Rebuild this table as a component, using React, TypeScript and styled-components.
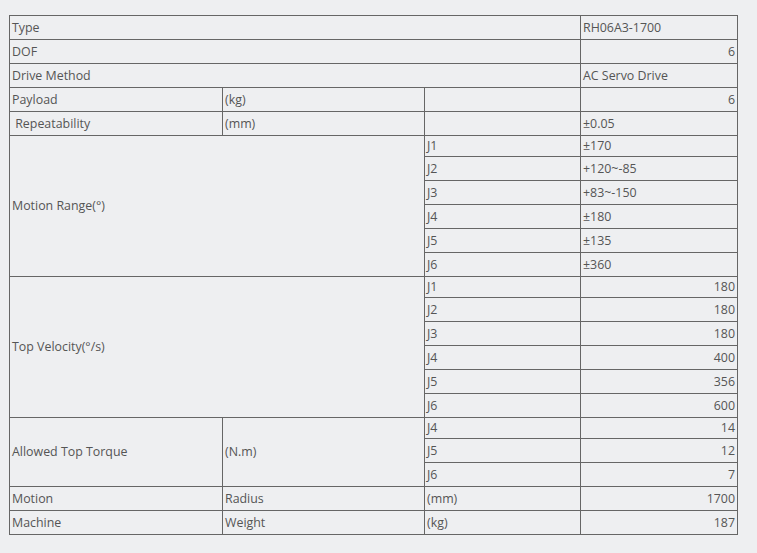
import React from "react";
import styled, { createGlobalStyle } from "styled-components";

const Global = createGlobalStyle`
  html, body { margin: 0; padding: 0; background: #eeeff1; }
  body { font-family: "Open Sans", "Noto Sans CJK SC", sans-serif; }
`;

const Page = styled.div`
  padding: 15px 0 0 9px;
  width: 757px;
  height: 553px;
  box-sizing: border-box;
  background: #eeeff1;
`;

const Table = styled.table`
  border-collapse: collapse;
  table-layout: fixed;
  width: 728px;
  font-size: 12.4px;
  color: #555;
`;

const Row = styled.tr<{ $h: number }>`
  height: ${(p) => p.$h}px;
`;

const Cell = styled.td<{ $right?: boolean }>`
  border: 1px solid #666;
  padding: 0 2px;
  text-align: ${(p) => (p.$right ? "right" : "left")};
  vertical-align: middle;
  white-space: nowrap;
  line-height: 16px;
`;

type Sub = { j: string; v: string; right?: boolean };

const motion: Sub[] = [
  { j: "J1", v: "±170" },
  { j: "J2", v: "+120~-85" },
  { j: "J3", v: "+83~-150" },
  { j: "J4", v: "±180" },
  { j: "J5", v: "±135" },
  { j: "J6", v: "±360" },
];
const velocity: Sub[] = [
  { j: "J1", v: "180", right: true },
  { j: "J2", v: "180", right: true },
  { j: "J3", v: "180", right: true },
  { j: "J4", v: "400", right: true },
  { j: "J5", v: "356", right: true },
  { j: "J6", v: "600", right: true },
];
const torque: Sub[] = [
  { j: "J4", v: "14", right: true },
  { j: "J5", v: "12", right: true },
  { j: "J6", v: "7", right: true },
];

export default function App() {
  return (
    <>
      <Global />
      <Page>
        <Table>
          <colgroup>
            <col style={{ width: 213 }} />
            <col style={{ width: 202 }} />
            <col style={{ width: 156 }} />
            <col style={{ width: 157 }} />
          </colgroup>
          <tbody>
            <Row $h={24}>
              <Cell colSpan={3}>Type</Cell>
              <Cell>RH06A3-1700</Cell>
            </Row>
            <Row $h={24}>
              <Cell colSpan={3}>DOF</Cell>
              <Cell $right>6</Cell>
            </Row>
            <Row $h={24}>
              <Cell colSpan={3}>Drive Method</Cell>
              <Cell>AC Servo Drive</Cell>
            </Row>
            <Row $h={24}>
              <Cell>Payload</Cell>
              <Cell>(kg)</Cell>
              <Cell></Cell>
              <Cell $right>6</Cell>
            </Row>
            <Row $h={24}>
              <Cell>&nbsp;Repeatability</Cell>
              <Cell>(mm)</Cell>
              <Cell></Cell>
              <Cell>±0.05</Cell>
            </Row>
            {motion.map((m, i) => (
              <Row $h={i === 0 ? 21 : 24} key={"m" + m.j}>
                {i === 0 && (
                  <Cell colSpan={2} rowSpan={motion.length}>
                    Motion Range(°)
                  </Cell>
                )}
                <Cell>{m.j}</Cell>
                <Cell $right={m.right}>{m.v}</Cell>
              </Row>
            ))}
            {velocity.map((m, i) => (
              <Row $h={i === 0 ? 21 : 24} key={"v" + m.j}>
                {i === 0 && (
                  <Cell colSpan={2} rowSpan={velocity.length}>
                    Top Velocity(°/s)
                  </Cell>
                )}
                <Cell>{m.j}</Cell>
                <Cell $right={m.right}>{m.v}</Cell>
              </Row>
            ))}
            {torque.map((m, i) => (
              <Row $h={i === 0 ? 21 : 24} key={"t" + m.j}>
                {i === 0 && (
                  <>
                    <Cell rowSpan={torque.length}>Allowed Top Torque</Cell>
                    <Cell rowSpan={torque.length}>(N.m)</Cell>
                  </>
                )}
                <Cell>{m.j}</Cell>
                <Cell $right={m.right}>{m.v}</Cell>
              </Row>
            ))}
            <Row $h={24}>
              <Cell>Motion</Cell>
              <Cell>Radius</Cell>
              <Cell>(mm)</Cell>
              <Cell $right>1700</Cell>
            </Row>
            <Row $h={24}>
              <Cell>Machine</Cell>
              <Cell>Weight</Cell>
              <Cell>(kg)</Cell>
              <Cell $right>187</Cell>
            </Row>
          </tbody>
        </Table>
      </Page>
    </>
  );
}
